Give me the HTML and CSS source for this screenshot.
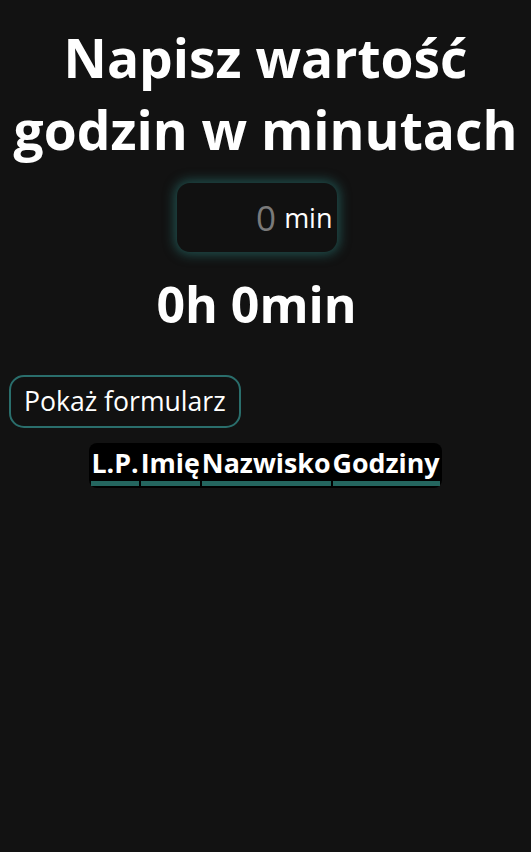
FILE: index.html
```html
<!DOCTYPE html>
<html lang="pl">
<head>
<meta charset="utf-8">
<title>Godziny w minutach</title>
<link rel="stylesheet" href="styles.css">
</head>
<body>
<h1 class="title">Napisz wartość godzin w minutach</h1>
<div class="converter">
  <label class="field">
    <input class="field-input" type="number" placeholder="0">
    <span class="field-unit">min</span>
  </label>
  <h2 class="result">0h 0min</h2>
</div>
<button class="toggle" type="button">Pokaż formularz</button>
<table class="list">
  <thead>
    <tr>
      <th>L.P.</th>
      <th>Imię</th>
      <th>Nazwisko</th>
      <th>Godziny</th>
    </tr>
  </thead>
</table>
</body>
</html>
```
FILE: styles.css
```css
html {
  background: #121212;
}
body {
  margin: 8px;
  background: #121212;
  color: #ffffff;
  font-family: "Open Sans", "DejaVu Sans", sans-serif;
}
.title {
  margin: 14px 0 0;
  font-size: 53.3px;
  line-height: 72px;
  font-weight: 700;
  text-align: center;
}
.converter {
  display: flex;
  flex-direction: column;
  align-items: center;
  padding-right: 18px;
}
.field {
  margin-top: 17px;
  width: 160px;
  height: 69px;
  box-sizing: border-box;
  display: flex;
  align-items: center;
  justify-content: flex-end;
  gap: 8px;
  padding: 0 4px 0 10px;
  background: #111111;
  border-radius: 13px;
  box-shadow: 0 0 11px 3px rgba(40, 115, 112, 0.6);
}
.field-input {
  width: 60px;
  min-width: 0;
  padding: 0;
  border: none;
  outline: none;
  background: transparent;
  color: #ffffff;
  font-family: "Open Sans", sans-serif;
  font-size: 35px;
  text-align: right;
  -moz-appearance: textfield;
}
.field-input::-webkit-outer-spin-button,
.field-input::-webkit-inner-spin-button {
  -webkit-appearance: none;
  margin: 0;
}
.field-input::placeholder {
  color: #7a7a7a;
}
.field-unit {
  font-size: 27px;
  line-height: 36px;
}
.result {
  margin: 20px 0 0;
  font-size: 50px;
  line-height: 64px;
  font-weight: 700;
}
.toggle {
  display: block;
  margin: 39px 0 0 1px;
  padding: 6px 13px 7px;
  background: #111111;
  color: #ffffff;
  border: 2px solid #2a6e6c;
  border-radius: 15px;
  font-family: "Open Sans", sans-serif;
  font-size: 26.6px;
  line-height: 36px;
}
.list {
  margin: 15px auto 0;
  background: #000000;
  border-spacing: 2px;
  border-radius: 8px;
}
.list th {
  padding: 0;
  font-size: 26.8px;
  line-height: 36px;
  font-weight: 700;
  border-bottom: 5px solid #24665f;
}
```
